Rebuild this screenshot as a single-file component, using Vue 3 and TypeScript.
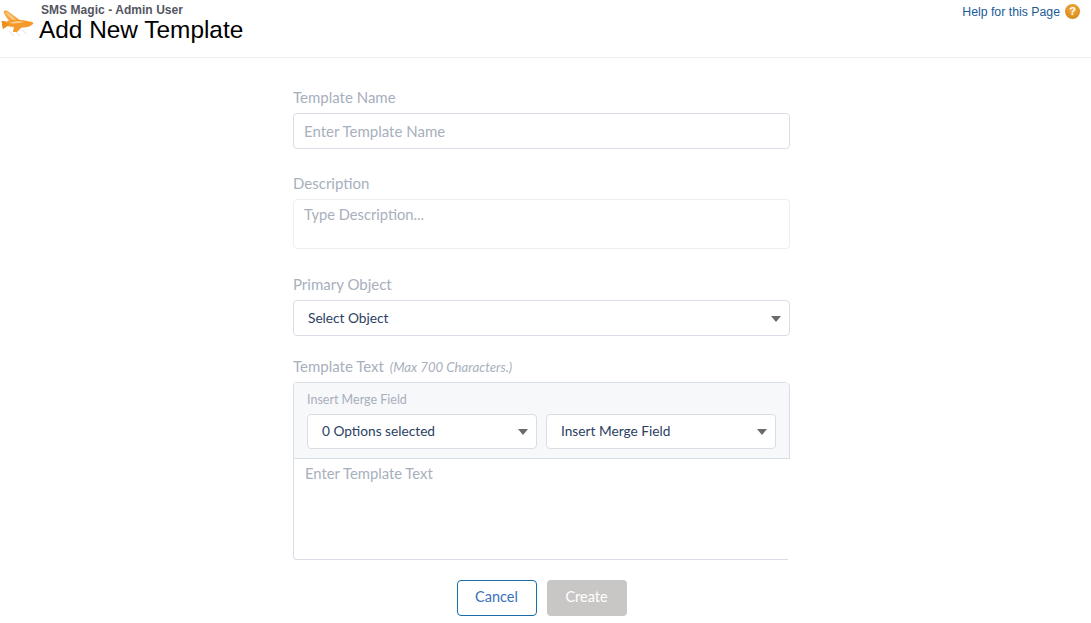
<script setup lang="ts">
const title: string = 'Add New Template'
</script>

<template>
  <div class="page">
    <header class="head">
      <div class="brand">
        <svg class="plane" width="34" height="30" viewBox="1 8 34 30">
          <path d="M9 31 L14 36 M15 31 L20 36 M22 30 L27 34" stroke="#e8e3dc" stroke-width="1" fill="none" />
          <path d="M4 13 C3 10 6 10 9 12 L21 21 L14 25 C10 22 6 18 4 13 Z" fill="#f6a63f" />
          <path d="M5 12 C7 12 9 13 11 15 L16 20 L13 20 C10 18 7 15 5 12 Z" fill="#fcc981" />
          <path d="M2 24 C7 20 14 19 21 20 C26 21 31 21 33.5 23 C32 26 28 27 24 27.5 C18 28 11 27 7 26 L3 29 Z" fill="#f59a2a" />
          <path d="M9 23 C14 21 20 21 24 22 C20 23 14 24 9 23 Z" fill="#fdd193" />
          <path d="M1.5 21 L5 21 L9 25 L3 29 Z" fill="#ee8f1f" />
          <path d="M14 26 L22 27 L17 32 L13 32 Z" fill="#f29a2c" />
        </svg>
        <div class="titles">
          <div class="sub">SMS Magic - Admin User</div>
          <h1>{{ title }}</h1>
        </div>
      </div>
      <a class="help">
        <span>Help for this Page</span>
        <span class="q">?</span>
      </a>
    </header>

    <form class="form">
      <div class="field f1">
        <label>Template Name</label>
        <div class="box input">Enter Template Name</div>
      </div>
      <div class="field f2">
        <label>Description</label>
        <div class="box area">Type Description...</div>
      </div>
      <div class="field f3">
        <label>Primary Object</label>
        <div class="box select"><span>Select Object</span><i class="caret"></i></div>
      </div>
      <div class="field f4">
        <label>Template Text <em>(Max 700 Characters.)</em></label>
        <div class="editor">
          <div class="tools">
            <div class="tools-label">Insert Merge Field</div>
            <div class="tools-row">
              <div class="box select small"><span>0 Options selected</span><i class="caret"></i></div>
              <div class="box select small"><span>Insert Merge Field</span><i class="caret"></i></div>
            </div>
          </div>
          <div class="text">Enter Template Text</div>
        </div>
      </div>
      <div class="actions">
        <button type="button" class="btn cancel">Cancel</button>
        <button type="button" class="btn create">Create</button>
      </div>
    </form>
  </div>
</template>

<style>
html, body { margin: 0; background: #fff; }
</style>

<style scoped>
.page {
  width: 1091px;
  height: 623px;
  overflow: hidden;
  font-family: Lato, "Open Sans", sans-serif;
  color: #16325c;
}
.head {
  height: 57px;
  border-bottom: 1px solid #f1f1f1;
  display: flex;
  justify-content: space-between;
  align-items: flex-start;
  font-family: "Liberation Sans", Arial, sans-serif;
}
.brand { display: flex; align-items: flex-start; padding-left: 1px; }
.plane { margin-top: 8px; flex: none; }
.titles { margin-left: 4px; }
.sub {
  font-size: 12px;
  font-weight: 700;
  line-height: 14px;
  letter-spacing: 0.05px;
  color: #55555f;
  margin: 3px 0 0 2px;
}
h1 {
  margin: 0;
  font-size: 24.4px;
  font-weight: 400;
  line-height: 26px;
  color: #000;
}
.help {
  display: flex;
  align-items: center;
  gap: 5px;
  font-size: 12.3px;
  line-height: 16px;
  color: #1b5b97;
  margin: 4px 11px 0 0;
}
.q {
  width: 15px;
  height: 15px;
  margin-top: -2px;
  border-radius: 50%;
  background: radial-gradient(circle at 50% 35%, #f3ae3e, #cf7d10);
  color: #fff;
  font-size: 11px;
  font-weight: 700;
  line-height: 15px;
  text-align: center;
}
.form { width: 497px; margin-left: 293px; }
.field label {
  display: block;
  font-size: 15px;
  line-height: 18px;
  color: #a8afbd;
}
.field em { font-size: 13.2px; margin-left: 2px; }
.f1 { padding-top: 30px; }
.f2 { padding-top: 25px; }
.f3 { padding-top: 26px; }
.f4 { padding-top: 21px; }
.f1 label, .f2 label, .f3 label { margin-bottom: 7px; }
.f4 label { margin-bottom: 6px; }
.box {
  box-sizing: border-box;
  border: 1px solid #d8dde6;
  border-radius: 4px;
  background: #fff;
  font-size: 15px;
}
.input {
  height: 36px;
  line-height: 34px;
  padding-left: 10px;
  color: #a8afbd;
}
.area {
  height: 50px;
  padding: 5px 10px;
  font-size: 14.7px;
  line-height: 18px;
  color: #a8afbd;
  border-color: #eceef2;
}
.select {
  height: 36px;
  display: flex;
  align-items: center;
  justify-content: space-between;
  padding: 0 8px 2px 14px;
  font-size: 13.7px;
  color: #2a4163;
}
.caret {
  width: 0;
  height: 0;
  border-left: 5.5px solid transparent;
  border-right: 5.5px solid transparent;
  border-top: 6px solid #6b6b6b;
  margin-top: 3px;
}
.editor {
  box-sizing: border-box;
  height: 178px;
  border: 1px solid #d8dde6;
  border-right: 0;
  border-radius: 4px 4px 0 4px;
  position: relative;
  margin-right: 2px;
}
.tools {
  box-sizing: border-box;
  height: 76px;
  margin-right: -2px;
  padding: 9px 14px 0 13px;
  background: #f7f8fa;
  border-bottom: 1px solid #d8dde6;
  border-right: 1px solid #d8dde6;
  border-top-right-radius: 4px;
}
.tools-label {
  font-size: 12.5px;
  line-height: 16px;
  color: #a8afbd;
  margin-bottom: 6px;
}
.tools-row { display: grid; grid-template-columns: 230px 230px; column-gap: 9px; }
.small { height: 35px; }
.text {
  padding: 5px 11px;
  font-size: 14.8px;
  line-height: 18px;
  color: #a8afbd;
}
.actions {
  display: flex;
  justify-content: center;
  gap: 10px;
  margin-top: 20px;
}
.btn {
  box-sizing: border-box;
  width: 80px;
  height: 36px;
  padding: 0 0 3px;
  border-radius: 4px;
  font-family: inherit;
  font-size: 14.5px;
}
.cancel { background: #fff; border: 1px solid #1b6ca8; color: #3a70b8; }
.create { background: #c9c7c5; border: 0; color: #fff; }
</style>
